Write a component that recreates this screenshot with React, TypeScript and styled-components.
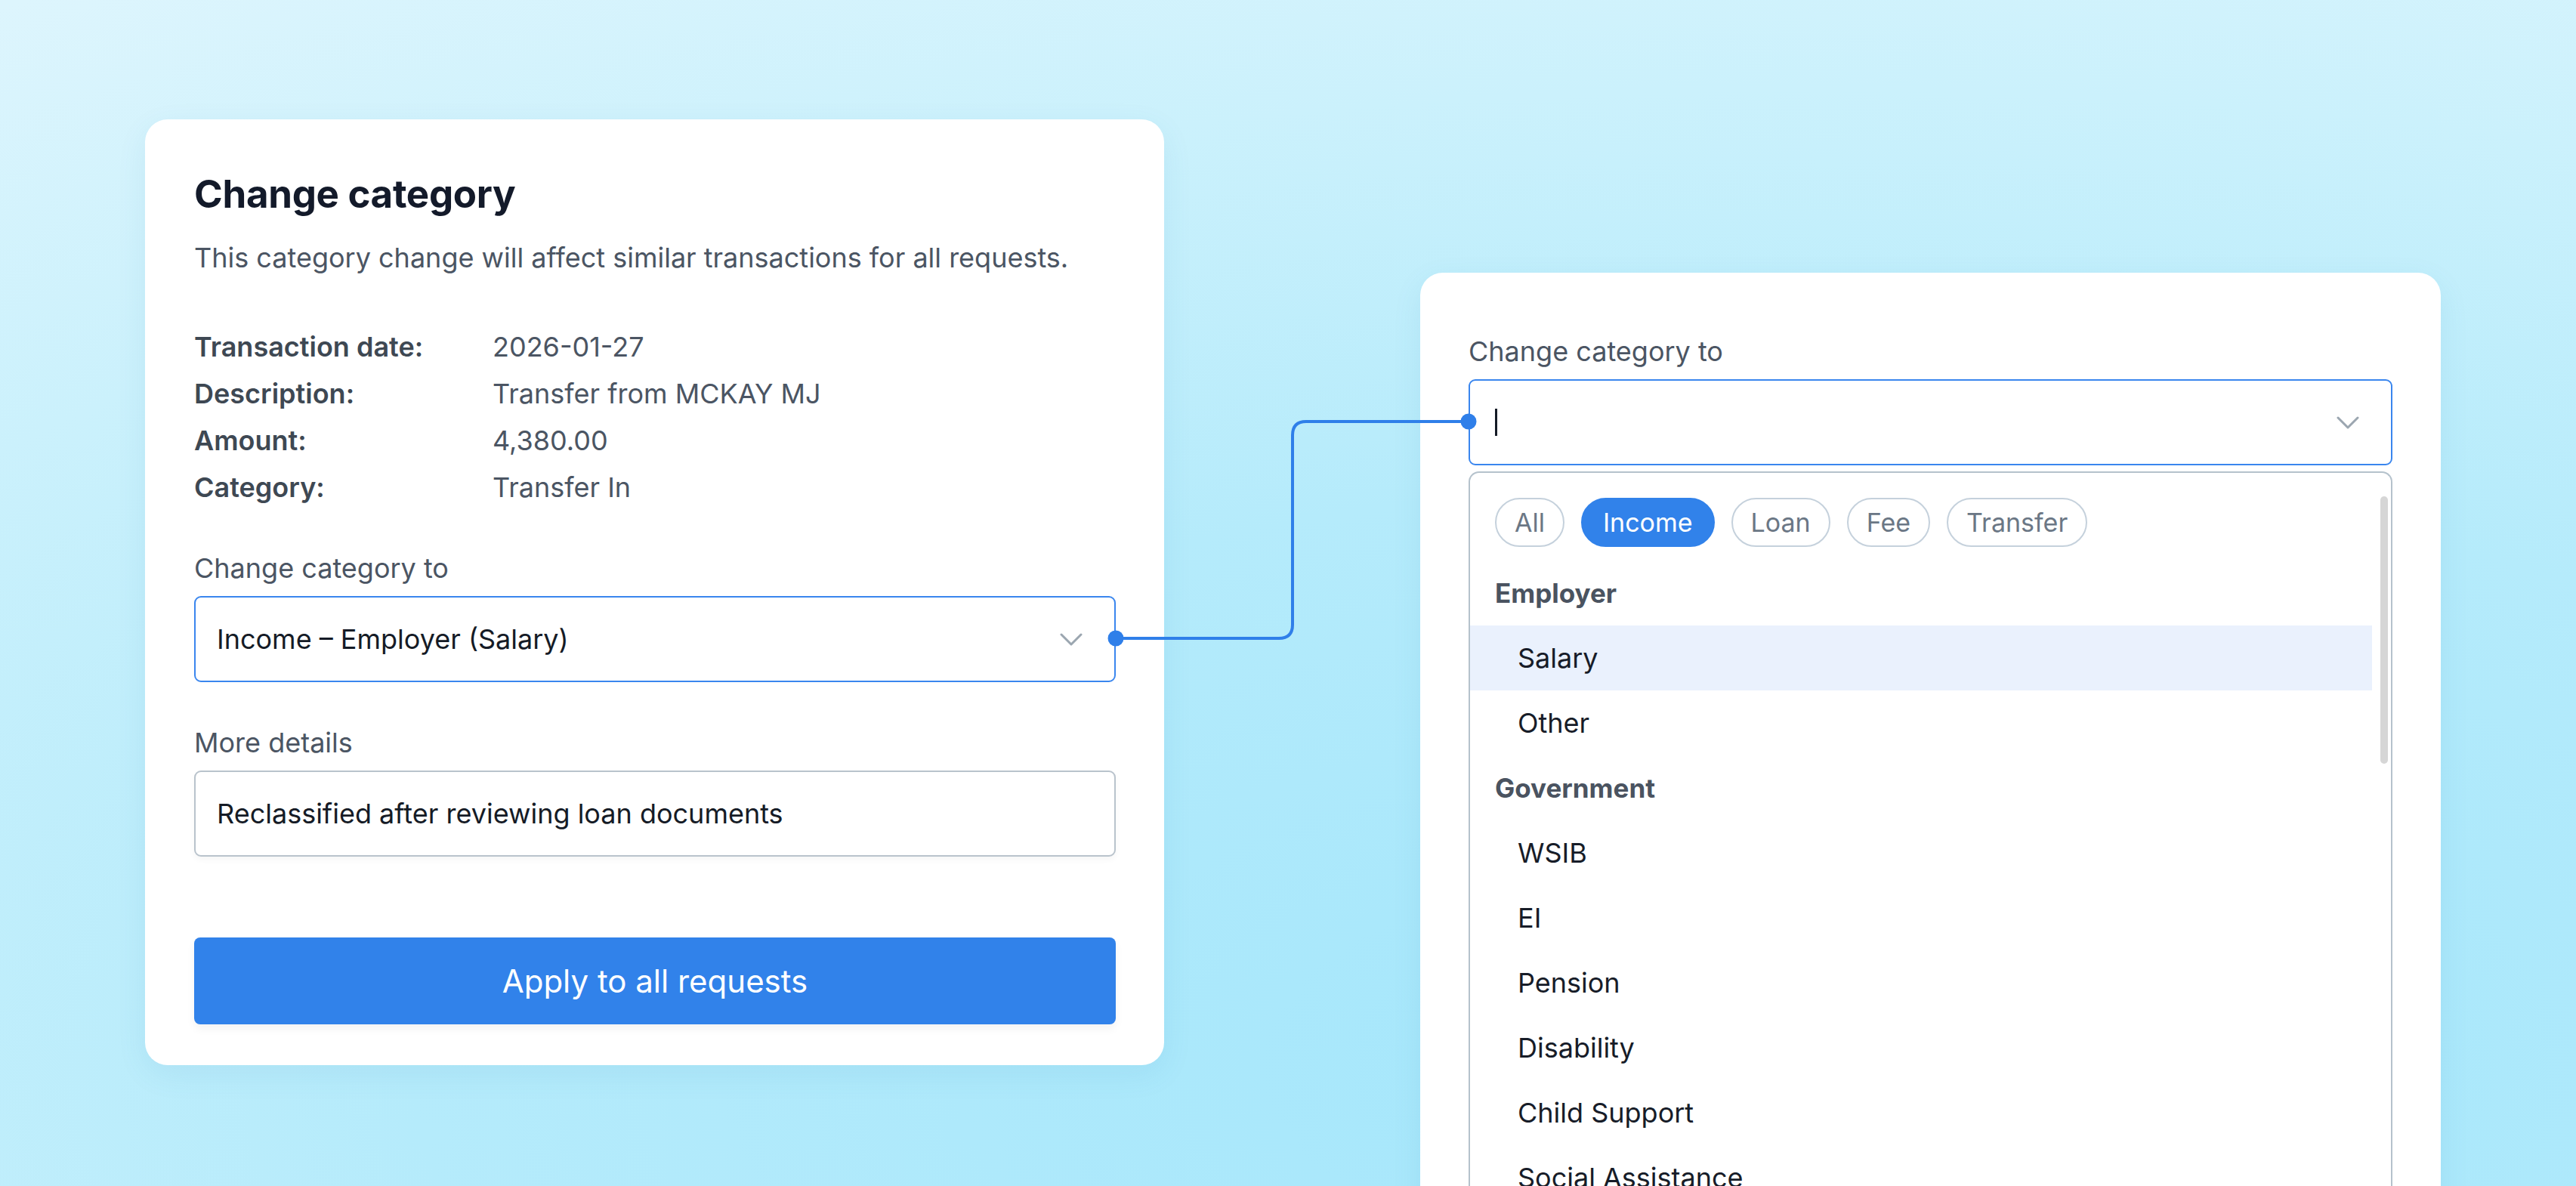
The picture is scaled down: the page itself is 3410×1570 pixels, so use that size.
import React from 'react';
import styled, { createGlobalStyle } from 'styled-components';

const GlobalStyle = createGlobalStyle`
  html, body {
    margin: 0;
    padding: 0;
  }
  body {
    font-family: Inter, "Liberation Sans", sans-serif;
    -webkit-font-smoothing: antialiased;
  }
`;

const BLUE = '#3182ea';

const Page = styled.div`
  position: relative;
  box-sizing: border-box;
  width: 3410px;
  height: 1570px;
  overflow: hidden;
  display: flex;
  align-items: flex-start;
  gap: 339px;
  padding: 158px 0 0 192px;
  background-color: #c8f0fc;
  background-image: radial-gradient(120% 110% at 70% 90%, #a3e6fb 0%, #b5ebfb 45%, #cbf1fc 75%, #ddf5fd 100%);
`;

const Card = styled.section<{ $top?: number; $width: number }>`
  box-sizing: border-box;
  flex: none;
  width: ${p => p.$width}px;
  margin-top: ${p => p.$top ?? 0}px;
  background: #fff;
  border-radius: 30px;
  box-shadow: 0 12px 40px rgba(30, 120, 160, 0.08);
`;

const FormCard = styled(Card)`
  padding: 68px 64px 54px 65px;
`;

const PickerCard = styled(Card)`
  padding: 79px 64px 0 64px;
  min-height: 1400px;
`;

const Title = styled.h1`
  margin: 0;
  font-size: 51px;
  line-height: 62px;
  font-weight: 700;
  color: #131a2a;
  letter-spacing: -0.3px;
`;

const Subtitle = styled.p`
  margin: 28px 0 0;
  font-size: 36px;
  line-height: 50px;
  color: #4b5563;
`;

const Details = styled.dl`
  margin: 62px 0 0;
  display: grid;
  grid-template-columns: 395px 1fr;
  grid-auto-rows: 62px;
  align-items: center;
  font-size: 36px;
`;

const DetailLabel = styled.dt`
  margin: 0;
  font-weight: 600;
  color: #3e4853;
`;

const DetailValue = styled.dd`
  margin: 0;
  color: #4b5563;
`;

const FieldLabel = styled.label<{ $gap: number }>`
  display: block;
  margin-top: ${p => p.$gap}px;
  font-size: 36px;
  line-height: 50px;
  color: #4b5563;
`;

const Box = styled.div<{ $active?: boolean }>`
  box-sizing: border-box;
  height: 114px;
  margin-top: 12px;
  display: flex;
  align-items: center;
  padding: 0 42px 0 28px;
  border: 2px solid ${p => (p.$active ? '#3a86ee' : '#b9c3cc')};
  border-radius: 9px;
  background: #fff;
  font-size: 36px;
  color: #151b26;
  box-shadow: ${p => (p.$active ? 'none' : '0 4px 8px rgba(0, 0, 0, 0.04)')};
`;

const BoxText = styled.span`
  flex: 1;
`;

const Caret = styled.span`
  display: block;
  width: 3px;
  height: 36px;
  margin-left: 5px;
  background: #151b26;
`;

const Spacer = styled.span`
  flex: 1;
`;

const Button = styled.button`
  display: block;
  box-sizing: border-box;
  width: 100%;
  height: 115px;
  margin-top: 107px;
  border: none;
  border-radius: 8px;
  background: ${BLUE};
  color: #fff;
  font-family: inherit;
  font-size: 42px;
  box-shadow: 0 6px 12px rgba(0, 0, 0, 0.05);
`;

const Panel = styled.div`
  position: relative;
  box-sizing: border-box;
  margin-top: 8px;
  padding: 33px 25px 0 0;
  border: 2px solid #b5c2cc;
  border-bottom: none;
  border-radius: 14px 14px 0 0;
  min-height: 1000px;
`;

const Chips = styled.div`
  display: flex;
  gap: 22px;
  padding-left: 33px;
`;

const Chip = styled.span<{ $active?: boolean }>`
  box-sizing: border-box;
  height: 65px;
  display: flex;
  align-items: center;
  padding: 0 ${p => (p.$active ? 27 : 24)}px;
  border-radius: 33px;
  border: 2px solid ${p => (p.$active ? BLUE : '#c5d1dc')};
  background: ${p => (p.$active ? BLUE : '#fff')};
  color: ${p => (p.$active ? '#fff' : '#6b7785')};
  font-size: 34px;
`;

const List = styled.ul`
  list-style: none;
  margin: 18px 0 0;
  padding: 0;
`;

const Row = styled.li<{ $header?: boolean; $selected?: boolean }>`
  height: 86px;
  display: flex;
  align-items: center;
  padding-left: ${p => (p.$header ? 33 : 63)}px;
  font-size: ${p => (p.$header ? 35 : 36)}px;
  font-weight: ${p => (p.$header ? 700 : 400)};
  color: ${p => (p.$header ? '#4a5360' : '#171c28')};
  background: ${p => (p.$selected ? '#eaf1fd' : 'transparent')};
`;

const ScrollThumb = styled.div`
  position: absolute;
  top: 31px;
  right: 4px;
  width: 10px;
  height: 354px;
  border-radius: 5px;
  background: #d6d6d6;
`;

const Connector = styled.svg`
  position: absolute;
  left: 0;
  top: 0;
  pointer-events: none;
`;

const Chevron = () => (
  <svg width="30" height="17" viewBox="0 0 30 17" fill="none">
    <path d="M2 2 L15 15 L28 2" stroke="#9ba6b0" strokeWidth="3" strokeLinecap="round" strokeLinejoin="round" />
  </svg>
);

const details: [string, string][] = [
  ['Transaction date:', '2026-01-27'],
  ['Description:', 'Transfer from MCKAY MJ'],
  ['Amount:', '4,380.00'],
  ['Category:', 'Transfer In'],
];

const chips = ['All', 'Income', 'Loan', 'Fee', 'Transfer'];

const options: { label: string; header?: boolean; selected?: boolean }[] = [
  { label: 'Employer', header: true },
  { label: 'Salary', selected: true },
  { label: 'Other' },
  { label: 'Government', header: true },
  { label: 'WSIB' },
  { label: 'EI' },
  { label: 'Pension' },
  { label: 'Disability' },
  { label: 'Child Support' },
  { label: 'Social Assistance' },
];

export default function App() {
  return (
    <>
      <GlobalStyle />
      <Page>
        <FormCard $width={1349}>
          <Title>Change category</Title>
          <Subtitle>This category change will affect similar transactions for all requests.</Subtitle>
          <Details>
            {details.map(([label, value]) => (
              <React.Fragment key={label}>
                <DetailLabel>{label}</DetailLabel>
                <DetailValue>{value}</DetailValue>
              </React.Fragment>
            ))}
          </Details>
          <FieldLabel $gap={51}>Change category to</FieldLabel>
          <Box $active>
            <BoxText>Income – Employer (Salary)</BoxText>
            <Chevron />
          </Box>
          <FieldLabel $gap={55}>More details</FieldLabel>
          <Box>
            <BoxText>Reclassified after reviewing loan documents</BoxText>
          </Box>
          <Button>Apply to all requests</Button>
        </FormCard>

        <PickerCard $width={1351} $top={203}>
          <FieldLabel $gap={0}>Change category to</FieldLabel>
          <Box $active>
            <Caret />
            <Spacer />
            <Chevron />
          </Box>
          <Panel>
            <Chips>
              {chips.map(c => (
                <Chip key={c} $active={c === 'Income'}>{c}</Chip>
              ))}
            </Chips>
            <List>
              {options.map(o => (
                <Row key={o.label} $header={o.header} $selected={o.selected}>{o.label}</Row>
              ))}
            </List>
            <ScrollThumb />
          </Panel>
        </PickerCard>

        <Connector width="3410" height="1570" viewBox="0 0 3410 1570">
          <path
            d="M1477 845 H1693 Q1711 845 1711 827 V576 Q1711 558 1729 558 H1944"
            stroke="#2f7fe9"
            strokeWidth="4"
            fill="none"
          />
          <circle cx="1477" cy="845" r="10.5" fill="#2f7fe9" />
          <circle cx="1944" cy="558" r="10.5" fill="#2f7fe9" />
        </Connector>
      </Page>
    </>
  );
}
